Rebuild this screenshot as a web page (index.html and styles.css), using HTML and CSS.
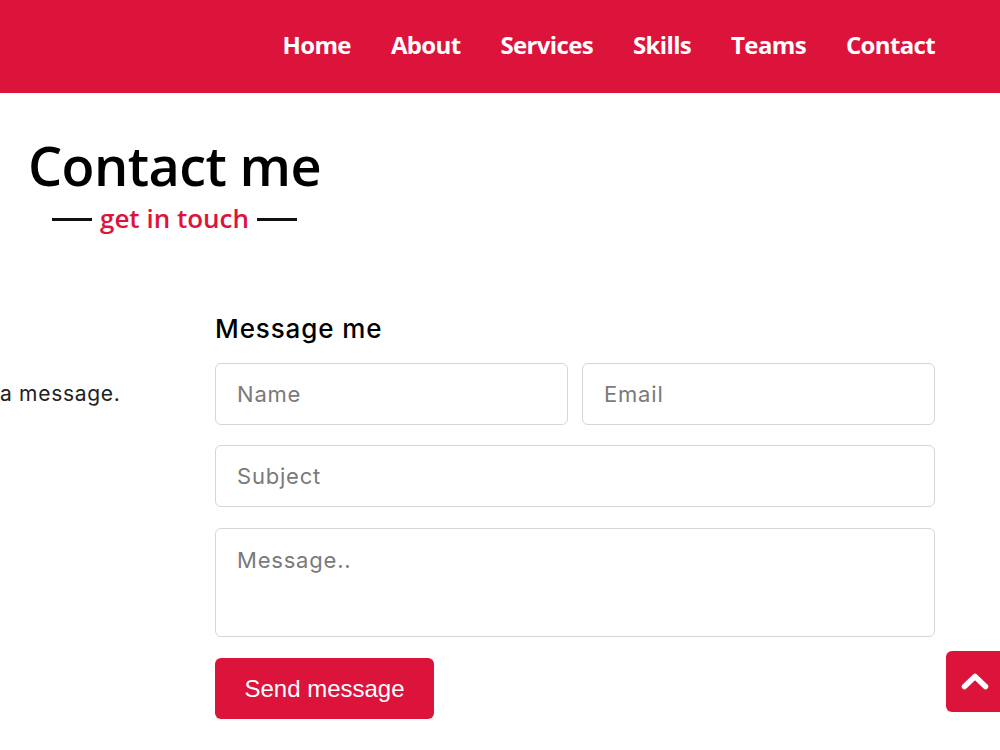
FILE: index.html
```html
<!DOCTYPE html>
<html>
<head>
<meta charset="utf-8">
<link rel="stylesheet" href="styles.css">
</head>
<body>
<header class="navbar">
  <nav class="menu">
    <a href="#">Home</a>
    <a href="#">About</a>
    <a href="#">Services</a>
    <a href="#">Skills</a>
    <a href="#">Teams</a>
    <a href="#">Contact</a>
  </nav>
</header>
<section class="contact">
  <div class="title-wrap">
    <h2 class="title">Contact me</h2>
    <div class="subtitle"><span class="line"></span><span class="sub-text">get in touch</span><span class="line"></span></div>
  </div>
  <div class="content">
    <div class="left">
      <p class="left-text">a message.</p>
    </div>
    <div class="right">
      <h3 class="form-title">Message me</h3>
      <form class="form">
        <div class="row">
          <input class="field" type="text" placeholder="Name">
          <input class="field" type="text" placeholder="Email">
        </div>
        <input class="field" type="text" placeholder="Subject">
        <textarea class="field area" placeholder="Message.."></textarea>
        <div class="actions"><button class="send" type="button">Send message</button></div>
      </form>
    </div>
  </div>
</section>
<a class="scroll-up" href="#"><svg width="28" height="20" viewBox="0 0 28 20"><path d="M3.5 15.5 L14 5.5 L24.5 15.5" fill="none" stroke="#fff" stroke-width="5.5" stroke-linecap="round" stroke-linejoin="round"/></svg></a>
</body>
</html>
```
FILE: styles.css
```css
* { box-sizing: border-box; }
html, body { margin: 0; padding: 0; }
body { font-family: "Open Sans", sans-serif; background: #fff; overflow: hidden; width: 1000px; height: 750px; }
.navbar { background: #dc143c; height: 93px; display: flex; justify-content: flex-end; align-items: center; padding-right: 65px; padding-bottom: 4px; }
.menu { display: flex; gap: 40px; }
.menu a { color: #fff; text-decoration: none; font-family: "Open Sans", sans-serif; font-weight: 700; font-size: 24px; letter-spacing: -0.65px; }
.contact { padding-top: 40px; }
.title-wrap { display: inline-flex; flex-direction: column; align-items: center; margin-left: 28px; }
.title { margin: 0; font-family: "Open Sans", sans-serif; font-weight: 600; font-size: 54px; line-height: 64px; color: #000; letter-spacing: -0.6px; }
.subtitle { display: flex; align-items: center; gap: 8px; margin-top: 5px; }
.line { width: 40px; height: 3px; background: #111; margin-top: 3px; }
.sub-text { color: #dc143c; font-size: 26px; font-weight: 600; line-height: 32px; letter-spacing: 0px; }
.content { display: flex; margin-top: 79px; }
.left { width: 215px; flex: none; padding-top: 66px; }
.left-text { margin: 0; font-family: "Inter", sans-serif; font-size: 21px; color: #222; line-height: 30px; letter-spacing: 0.7px; }
.right { width: 720px; }
.form-title { margin: 0 0 18px; font-family: "Inter", sans-serif; font-weight: 500; font-size: 26px; line-height: 32px; color: #000; letter-spacing: 0.9px; }
.form { display: flex; flex-direction: column; gap: 20px; }
.row { display: flex; gap: 14px; }
.field { width: 100%; height: 62px; border: 1px solid #d6d6d6; border-radius: 6px; padding: 0 21px; font-family: "Inter", sans-serif; font-size: 22px; letter-spacing: 0.8px; color: #333; outline: none; background: #fff; }
.field::placeholder { color: #7a7a7a; }
.area { height: 109px; padding-top: 18px; resize: none; margin-top: 1px; }
.actions { margin-top: 1px; }
.send { height: 61px; width: 219px; background: #dc143c; color: #fff; border: none; border-radius: 6px; font-family: "Liberation Sans", Arial, sans-serif; font-size: 24px; }
.scroll-up { position: absolute; left: 946px; top: 651px; width: 60px; height: 61px; background: #dc143c; border-radius: 6px; display: flex; align-items: center; justify-content: center; padding-right: 2px; padding-bottom: 2px; }
```
